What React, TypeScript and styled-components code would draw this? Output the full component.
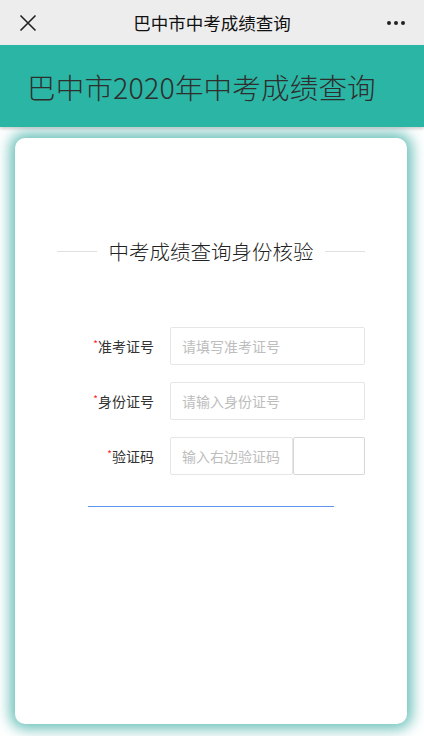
import React from "react";
import styled, { createGlobalStyle } from "styled-components";

const Global = createGlobalStyle`
  html, body { margin: 0; padding: 0; background: #ffffff; }
  body { font-family: "Noto Sans CJK SC", "Noto Sans", sans-serif; overflow: hidden; }
  * { box-sizing: border-box; }
`;

const Page = styled.div`
  width: 424px;
  height: 736px;
  display: flex;
  flex-direction: column;
  background: #ffffff;
`;

const TopBar = styled.div`
  height: 45px;
  flex: none;
  background: #ededed;
  display: grid;
  grid-template-columns: 56px 1fr 56px;
  align-items: center;
`;

const BarTitle = styled.div`
  text-align: center;
  font-size: 17.5px;
  color: #111111;
  font-weight: 400;
`;

const IconSlot = styled.div`
  display: flex;
  align-items: center;
  justify-content: center;
  height: 45px;
`;

const Header = styled.div`
  height: 82px;
  flex: none;
  background: #2bb5a4;
  display: flex;
  align-items: center;
  padding-left: 27px;
  box-shadow: 0 2px 3px rgba(0, 0, 0, 0.18);
  position: relative;
  z-index: 1;
`;

const HeaderTitle = styled.h1`
  margin: 0;
  font-size: 28.5px;
  font-weight: 300;
  color: #2e2e2e;
  letter-spacing: 0.2px;
`;

const Card = styled.div`
  margin: 11px 17px 0 15px;
  height: 586px;
  background: #ffffff;
  border-radius: 10px;
  box-shadow: 0 0 14px 5px rgba(40, 165, 155, 0.7);
  padding: 98px 42px 0 42px;
  display: flex;
  flex-direction: column;
`;

const SectionTitle = styled.div`
  display: flex;
  align-items: center;
  justify-content: space-between;
  height: 30px;
  flex: none;
`;

const Rule = styled.span`
  width: 40px;
  height: 1px;
  background: #e0e0e0;
`;

const SectionText = styled.div`
  font-size: 20.5px;
  font-weight: 300;
  color: #222222;
`;

const Form = styled.div`
  margin-top: 61px;
  display: flex;
  flex-direction: column;
  gap: 17px;
`;

const Row = styled.div`
  display: grid;
  grid-template-columns: 97px 195px;
  grid-template-rows: 38px;
  column-gap: 16px;
  align-items: center;
`;

const Label = styled.div`
  text-align: right;
  font-size: 14px;
  font-weight: 400;
  color: #333333;
`;

const Star = styled.span`
  color: #ff1f1f;
  font-size: 10px;
  vertical-align: 4px;
`;

const Field = styled.div`
  display: flex;
  align-items: flex-start;
  height: 38px;
`;

const Input = styled.input<{ $w?: number }>`
  width: ${(p) => (p.$w ? `${p.$w}px` : "100%")};
  height: 38px;
  border: 1px solid #e6e6e6;
  border-radius: 2px;
  padding: 0 11px;
  font-size: 14px;
  font-weight: 400;
  font-family: "Noto Sans CJK SC", "Noto Sans", sans-serif;
  color: #333;
  outline: none;
  background: #fff;
  &::placeholder { color: #bdbdbd; }
`;

const Captcha = styled.div`
  width: 72px;
  height: 38px;
  border: 1px solid #d6d6d6;
  border-radius: 2px;
  background: #fff;
`;

const SubmitLine = styled.div`
  margin: 31px auto 0;
  width: 246px;
  height: 1px;
  flex: none;
  background: #5f95f2;
`;

export default function App() {
  return (
    <Page>
      <Global />
      <TopBar>
        <IconSlot>
          <svg width="18" height="18" viewBox="0 0 18 18">
            <path d="M1.5 1.5 L16.5 16.5 M16.5 1.5 L1.5 16.5" stroke="#222" strokeWidth="1.6" fill="none" />
          </svg>
        </IconSlot>
        <BarTitle>巴中市中考成绩查询</BarTitle>
        <IconSlot>
          <svg width="20" height="6" viewBox="0 0 20 6">
            <circle cx="3" cy="3" r="2" fill="#222" />
            <circle cx="10" cy="3" r="2" fill="#222" />
            <circle cx="17" cy="3" r="2" fill="#222" />
          </svg>
        </IconSlot>
      </TopBar>
      <Header>
        <HeaderTitle>巴中市2020年中考成绩查询</HeaderTitle>
      </Header>
      <Card>
        <SectionTitle>
          <Rule />
          <SectionText>中考成绩查询身份核验</SectionText>
          <Rule />
        </SectionTitle>
        <Form>
          <Row>
            <Label><Star>*</Star>准考证号</Label>
            <Field><Input placeholder="请填写准考证号" /></Field>
          </Row>
          <Row>
            <Label><Star>*</Star>身份证号</Label>
            <Field><Input placeholder="请输入身份证号" /></Field>
          </Row>
          <Row>
            <Label><Star>*</Star>验证码</Label>
            <Field>
              <Input $w={123} placeholder="输入右边验证码" />
              <Captcha />
            </Field>
          </Row>
        </Form>
        <SubmitLine />
      </Card>
    </Page>
  );
}
